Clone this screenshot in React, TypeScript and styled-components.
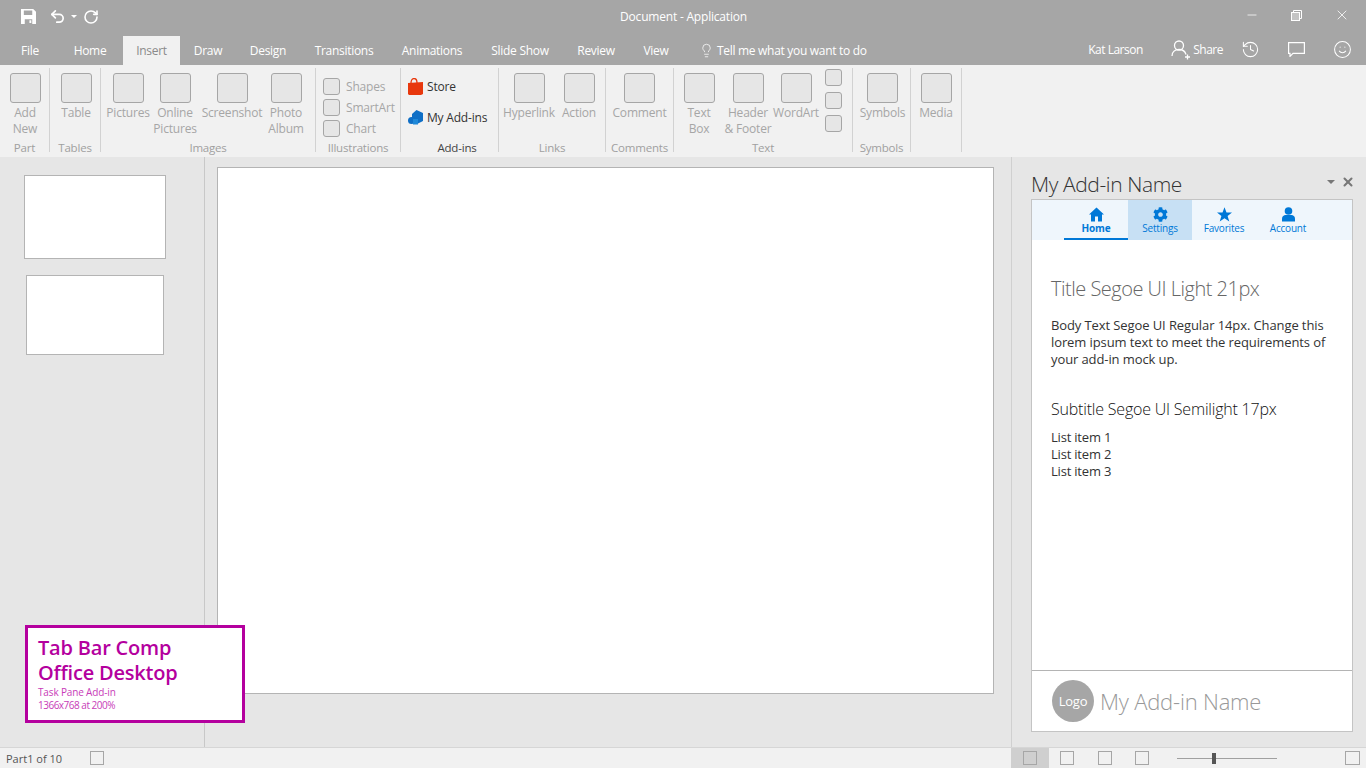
import styled, { createGlobalStyle } from "styled-components";
import { Lightbulb, History, Smile, Undo2, RotateCw, X, Minus } from "lucide-react";
import { FaCog } from "react-icons/fa";

const GlobalStyle = createGlobalStyle`
  html, body {
    margin: 0;
    padding: 0;
    background: #e6e6e6;
  }
  * {
    box-sizing: border-box;
  }
`;

const tabs = [
  { label: "File", w: 60 },
  { label: "Home", w: 60 },
  { label: "Insert", w: 57, active: true, ml: 3 },
  { label: "Draw", w: 56 },
  { label: "Design", w: 64 },
  { label: "Transitions", w: 88 },
  { label: "Animations", w: 88 },
  { label: "Slide Show", w: 88 },
  { label: "Review", w: 64 },
  { label: "View", w: 56 },
];

const Page = styled.div`
  position: relative;
  width: 1366px;
  height: 768px;
  display: flex;
  flex-direction: column;
  overflow: hidden;
  font-family: "Open Sans", "Noto Sans", sans-serif;
  font-size: 12px;
  letter-spacing: -0.2px;
`;

const TitleBar = styled.header`
  height: 65px;
  background: #a6a6a6;
  color: #fff;
  display: flex;
  flex-direction: column;
  flex: none;
`;

const TopRow = styled.div`
  height: 36px;
  display: flex;
  align-items: center;
`;

const Quick = styled.div`
  display: flex;
  align-items: center;
  padding: 0 0 3px 21px;
  width: 500px;
`;

const UndoIcon = styled(Undo2)`
  margin-left: 13px;
`;

const DocTitle = styled.div`
  width: 367px;
  padding-bottom: 4px;
  text-align: center;
`;

const WindowButtons = styled.div`
  margin-left: auto;
  display: flex;
  align-items: center;
  padding: 0 16px 6px 0;
  gap: 32px;
`;

const TabRow = styled.nav`
  height: 29px;
  display: flex;
  align-items: stretch;
  letter-spacing: -0.3px;
`;

const Tab = styled.div<{ $w: number; $ml?: number; $active?: boolean }>`
  width: ${(p) => p.$w}px;
  margin-left: ${(p) => p.$ml ?? 0}px;
  display: flex;
  align-items: center;
  justify-content: center;
  background: ${(p) => (p.$active ? "#f1f1f1" : "transparent")};
  color: ${(p) => (p.$active ? "#8a8a8a" : "#fff")};
`;

const Tell = styled.div`
  margin-left: 15px;
  display: flex;
  align-items: center;
  gap: 3px;
`;

const Account = styled.div`
  margin-left: auto;
  display: flex;
  align-items: center;
  padding-bottom: 2px;
`;

const UserName = styled.span`
  width: 83px;
  letter-spacing: -0.5px;
`;

const ShareText = styled.span`
  margin: 0 18px 0 3px;
  letter-spacing: -0.5px;
`;

const AccountIcons = styled.div`
  display: flex;
  align-items: center;
  gap: 28px;
  padding-right: 14px;
`;

const Ribbon = styled.div`
  height: 92px;
  flex: none;
  background: #f1f1f1;
  display: flex;
  padding-top: 3px;
`;

const Group = styled.section<{ $w: number }>`
  width: ${(p) => p.$w}px;
  height: 84px;
  flex: none;
  border-right: 1px solid #d2d2d2;
  display: flex;
  flex-direction: column;
`;

const GroupBody = styled.div<{ $pad?: number }>`
  flex: 1;
  min-height: 0;
  display: flex;
  padding-left: ${(p) => p.$pad ?? 0}px;
`;

const GroupLabel = styled.div<{ $dark?: boolean; $shift?: number }>`
  height: 12px;
  flex: none;
  text-align: center;
  font-size: 11.5px;
  line-height: 16px;
  padding-left: ${(p) => p.$shift ?? 0}px;
  color: ${(p) => (p.$dark ? "#444" : "#a0a0a0")};
`;

const BigItem = styled.div<{ $w: number }>`
  width: ${(p) => p.$w}px;
  flex: none;
  display: flex;
  flex-direction: column;
  align-items: center;
  padding-top: 5px;
  text-align: center;
  color: #a6a6a6;
  line-height: 16.5px;
  white-space: nowrap;
`;

const BigBox = styled.div`
  width: 31px;
  height: 30px;
  margin-bottom: 1.5px;
  flex: none;
  background: #e6e6e6;
  border: 1.5px solid #a6a6a6;
  border-radius: 3px;
`;

const SmallColumn = styled.div<{ $pad: number; $gap: number; $top: number }>`
  display: flex;
  flex-direction: column;
  gap: ${(p) => p.$gap}px;
  padding: ${(p) => p.$top}px 0 0 ${(p) => p.$pad}px;
`;

const SmallRow = styled.div`
  display: flex;
  align-items: center;
  gap: 6px;
  color: #a6a6a6;
  height: 17px;
`;

const SmallBox = styled.div`
  width: 17px;
  height: 17px;
  flex: none;
  background: #e6e6e6;
  border: 1.5px solid #a6a6a6;
  border-radius: 3px;
`;

const AddInRow = styled.div`
  display: flex;
  align-items: center;
  gap: 4px;
  height: 17px;
  color: #333;
`;

const Workspace = styled.main`
  flex: 1;
  display: flex;
  min-height: 0;
`;

const Thumbs = styled.aside`
  width: 205px;
  flex: none;
  border-right: 1px solid #c8c8c8;
  display: flex;
  flex-direction: column;
  align-items: center;
  padding: 18px 15px 0 0;
  gap: 16px;
`;

const Thumb = styled.div<{ $w: number; $h: number }>`
  width: ${(p) => p.$w}px;
  height: ${(p) => p.$h}px;
  background: #fff;
  border: 1px solid #b4b4b4;
`;

const Stage = styled.div`
  flex: 1;
  min-width: 0;
  padding: 10px 17px 0 12px;
`;

const Slide = styled.div`
  width: 777px;
  height: 527px;
  background: #fff;
  border: 1px solid #b4b4b4;
`;

const Pane = styled.aside`
  width: 355px;
  flex: none;
  border-left: 1px solid #d0d0d0;
  padding: 0 13px 15px 19px;
  display: flex;
  flex-direction: column;
`;

const PaneHead = styled.div`
  height: 42px;
  flex: none;
  display: flex;
  align-items: flex-end;
  color: #333;
  font-size: 21px;
  line-height: 30px;
  font-weight: 300;
  letter-spacing: -0.4px;
  position: relative;
`;

const PaneControls = styled.div`
  position: absolute;
  right: -2px;
  top: 18px;
  display: flex;
  align-items: center;
  gap: 6px;
  color: #777;
`;

const Caret = styled.span`
  width: 0;
  height: 0;
  border-left: 4px solid transparent;
  border-right: 4px solid transparent;
  border-top: 4px solid #777;
`;

const QuickCaret = styled(Caret)`
  border-left-width: 3px;
  border-right-width: 3px;
  border-top: 3px solid #fff;
  margin: 0 6px 0 5px;
`;

const Frame = styled.div`
  flex: 1;
  min-height: 0;
  background: #fff;
  border: 1px solid #c4c4c4;
  display: flex;
  flex-direction: column;
`;

const TabBar = styled.div`
  height: 40px;
  flex: none;
  background: #eff6fc;
  display: flex;
  padding-left: 32px;
`;

const PaneTab = styled.div<{ $active?: boolean; $hover?: boolean }>`
  width: 64px;
  display: flex;
  flex-direction: column;
  align-items: center;
  padding-top: 7px;
  color: #0078d7;
  font-size: 10px;
  line-height: 13px;
  font-weight: ${(p) => (p.$active ? 700 : 400)};
  background: ${(p) => (p.$hover ? "#c7e0f4" : "transparent")};
  border-bottom: ${(p) => (p.$active ? "2px solid #0078d7" : "none")};
`;

const Content = styled.div`
  flex: 1;
  min-height: 0;
  padding: 34px 20px 0 19px;
  color: #333;
`;

const Title = styled.h1`
  margin: 0 0 13px;
  font-size: 20px;
  line-height: 30px;
  font-weight: 300;
  letter-spacing: -0.5px;
  color: #666;
`;

const Body = styled.p`
  margin: 0 0 29px;
  font-size: 13px;
  line-height: 17px;
  letter-spacing: -0.1px;
`;

const Subtitle = styled.h2`
  margin: 0 0 8px;
  font-size: 16px;
  line-height: 24px;
  font-weight: 300;
  letter-spacing: -0.2px;
  color: #111;
`;

const ListItem = styled.div`
  font-size: 13px;
  line-height: 17px;
`;

const BrandBar = styled.div`
  height: 61px;
  flex: none;
  border-top: 1px solid #b4b4b4;
  display: flex;
  align-items: center;
  gap: 6px;
  padding-left: 20px;
  color: #999;
  font-size: 22px;
  font-weight: 300;
`;

const LogoCircle = styled.div`
  width: 42px;
  height: 42px;
  border-radius: 50%;
  background: #a6a6a6;
  color: #fff;
  font-size: 13px;
  font-weight: 400;
  display: flex;
  align-items: center;
  justify-content: center;
`;

const StatusBar = styled.footer`
  height: 21px;
  flex: none;
  background: #f1f1f1;
  border-top: 1px solid #d6d6d6;
  display: flex;
  align-items: center;
  color: #555;
  font-size: 11px;
`;

const PartCount = styled.span`
  width: 90px;
  padding-left: 6px;
  letter-spacing: 0;
`;

const StatusBox = styled.div<{ $fill?: string }>`
  width: 14px;
  height: 14px;
  background: ${(p) => p.$fill ?? "#f1f1f1"};
  border: 1px solid #a6a6a6;
`;

const ViewButton = styled.div<{ $active?: boolean }>`
  width: 37.5px;
  height: 20px;
  display: flex;
  align-items: center;
  justify-content: center;
  background: ${(p) => (p.$active ? "#cfcfcf" : "transparent")};
`;

const Views = styled.div`
  margin-left: 907px;
  display: flex;
`;

const Zoom = styled.div`
  width: 100px;
  height: 1px;
  margin-left: 16px;
  background: #a0a0a0;
  position: relative;
`;

const ZoomThumb = styled.span`
  position: absolute;
  left: 35px;
  top: -5px;
  width: 4px;
  height: 11px;
  background: #555;
`;

const ZoomBox = styled(StatusBox)`
  width: 15px;
  margin-left: 68px;
`;

const Badge = styled.div`
  position: absolute;
  left: 25px;
  top: 625px;
  width: 220px;
  height: 98px;
  background: #fff;
  border: 3px solid #b4009e;
  padding: 7px 10px;
  color: #b4009e;
`;

const BadgeTitle = styled.div`
  font-size: 20px;
  line-height: 25px;
  font-weight: 600;
  letter-spacing: -0.2px;
`;

const BadgeNotes = styled.div`
  margin-top: 1px;
`;

const BadgeNote = styled.div<{ $tight?: boolean }>`
  font-size: 10px;
  line-height: 13px;
  color: #c83cb8;
  letter-spacing: ${(p) => (p.$tight ? "-0.5px" : "-0.15px")};
`;

const SaveIcon = () => (
  <svg width="15" height="15" viewBox="0 0 16 16" fill="#fff">
    <path d="M0 0h13l3 3v13H0zM3 1.500v5h9v-5zM4 11v5h8v-5zM9 12h2v3H9z" fillRule="evenodd" />
  </svg>
);

const RestoreIcon = () => (
  <svg width="11" height="11" viewBox="0 0 11 11" fill="none" stroke="#fff">
    <rect x="0.5" y="2.5" width="8" height="8" fill="#c4c4c4" />
    <path d="M2.5 2.5v-2h8v8h-2" />
  </svg>
);

const ShareIcon = () => (
  <svg width="19" height="20" viewBox="0 0 19 20" fill="none" stroke="#fff" strokeWidth="1.3">
    <circle cx="8" cy="5.5" r="4.5" />
    <path d="M1 16c0-4 3-6.500 7-6.500s6 1.500 7 5M14 17h5M16.500 14.500v5" />
  </svg>
);

const CommentIcon = () => (
  <svg width="17" height="15" viewBox="0 0 17 15" fill="none" stroke="#fff" strokeWidth="1.2">
    <path d="M.6.6h15.800v10.800H5l-3 3v-3H.6z" />
  </svg>
);

const StoreIcon = () => (
  <svg width="15" height="17" viewBox="0 0 15 17">
    <path d="M0 5l15-1v12l-2 1H1l-1-1z" fill="#e8380d" />
    <path d="M3 5c0-6 6-6 6 0" fill="none" stroke="#e8380d" strokeWidth="1.300" />
  </svg>
);

const AddInsIcon = () => (
  <svg width="15" height="16" viewBox="0 0 15 16">
    <path d="M8.500 0L15 3v8l-6 3V9H4V4z" fill="#0f6fc6" />
    <circle cx="3.500" cy="10.500" r="3.500" fill="#0f6fc6" />
    <rect x="5" y="9" width="5" height="5.500" fill="#1e88d8" />
  </svg>
);

const HomeIcon = () => (
  <svg width="15" height="15" viewBox="0 0 15 15" fill="currentColor">
    <path d="M7.500.5L15 7.500h-2V14.500H9V9.500H6V14.500H2V7.500H0z" />
  </svg>
);

const StarIcon = () => (
  <svg width="15" height="15" viewBox="0 0 15 15" fill="currentColor">
    <path d="M7.500.2l2 5.300h5.500l-4.400 3.400 1.700 5.700-4.800-3.400-4.800 3.400 1.700-5.700L0 5.500h5.500z" />
  </svg>
);

const UserIcon = () => (
  <svg width="15" height="15" viewBox="0 0 15 15" fill="currentColor">
    <circle cx="7.500" cy="4" r="3.800" />
    <path d="M1 14.500v-3c0-2 2-3.500 3.500-3.500h6c1.500 0 3.500 1.500 3.500 3.500v3z" />
  </svg>
);

export default function App() {
  return (
    <Page>
      <GlobalStyle />
      <TitleBar>
        <TopRow>
          <Quick>
            <SaveIcon />
            <UndoIcon size={17} strokeWidth={2.4} />
            <QuickCaret />
            <RotateCw size={16} strokeWidth={2.4} />
          </Quick>
          <DocTitle>Document - Application</DocTitle>
          <WindowButtons>
            <Minus size={14} strokeWidth={1.3} />
            <RestoreIcon />
            <X size={16} strokeWidth={1.2} />
          </WindowButtons>
        </TopRow>
        <TabRow>
          {tabs.map((t) => (
            <Tab key={t.label} $w={t.w} $ml={t.ml} $active={t.active}>
              {t.label}
            </Tab>
          ))}
          <Tell>
            <Lightbulb size={15} strokeWidth={1.2} />
            Tell me what you want to do
          </Tell>
          <Account>
            <UserName>Kat Larson</UserName>
            <ShareIcon />
            <ShareText>Share</ShareText>
            <AccountIcons>
              <History size={19} strokeWidth={1.3} />
              <CommentIcon />
              <Smile size={19} strokeWidth={1.3} />
            </AccountIcons>
          </Account>
        </TabRow>
      </TitleBar>

      <Ribbon>
        <Group $w={50}>
          <GroupBody>
            <BigItem $w={50}>
              <BigBox />
              Add
              <br />
              New
            </BigItem>
          </GroupBody>
          <GroupLabel>Part</GroupLabel>
        </Group>
        <Group $w={51}>
          <GroupBody>
            <BigItem $w={52}>
              <BigBox />
              Table
            </BigItem>
          </GroupBody>
          <GroupLabel>Tables</GroupLabel>
        </Group>
        <Group $w={215}>
          <GroupBody $pad={3}>
            <BigItem $w={48}>
              <BigBox />
              Pictures
            </BigItem>
            <BigItem $w={46}>
              <BigBox />
              Online
              <br />
              Pictures
            </BigItem>
            <BigItem $w={68}>
              <BigBox />
              Screenshot
            </BigItem>
            <BigItem $w={40}>
              <BigBox />
              Photo
              <br />
              Album
            </BigItem>
          </GroupBody>
          <GroupLabel>Images</GroupLabel>
        </Group>
        <Group $w={85}>
          <GroupBody>
            <SmallColumn $pad={7} $gap={4} $top={10}>
              <SmallRow>
                <SmallBox />
                Shapes
              </SmallRow>
              <SmallRow>
                <SmallBox />
                SmartArt
              </SmallRow>
              <SmallRow>
                <SmallBox />
                Chart
              </SmallRow>
            </SmallColumn>
          </GroupBody>
          <GroupLabel>Illustrations</GroupLabel>
        </Group>
        <Group $w={98}>
          <GroupBody>
            <SmallColumn $pad={7} $gap={14} $top={10}>
              <AddInRow>
                <StoreIcon />
                Store
              </AddInRow>
              <AddInRow>
                <AddInsIcon />
                My Add-ins
              </AddInRow>
            </SmallColumn>
          </GroupBody>
          <GroupLabel $dark $shift={15}>
            Add-ins
          </GroupLabel>
        </Group>
        <Group $w={107}>
          <GroupBody>
            <BigItem $w={60}>
              <BigBox />
              Hyperlink
            </BigItem>
            <BigItem $w={40}>
              <BigBox />
              Action
            </BigItem>
          </GroupBody>
          <GroupLabel>Links</GroupLabel>
        </Group>
        <Group $w={68}>
          <GroupBody>
            <BigItem $w={67}>
              <BigBox />
              Comment
            </BigItem>
          </GroupBody>
          <GroupLabel>Comments</GroupLabel>
        </Group>
        <Group $w={179}>
          <GroupBody>
            <BigItem $w={50}>
              <BigBox />
              Text
              <br />
              Box
            </BigItem>
            <BigItem $w={48}>
              <BigBox />
              Header
              <br />
              &amp; Footer
            </BigItem>
            <BigItem $w={48}>
              <BigBox />
              WordArt
            </BigItem>
            <SmallColumn $pad={5} $gap={6} $top={1}>
              <SmallBox />
              <SmallBox />
              <SmallBox />
            </SmallColumn>
          </GroupBody>
          <GroupLabel>Text</GroupLabel>
        </Group>
        <Group $w={58}>
          <GroupBody $pad={1}>
            <BigItem $w={57}>
              <BigBox />
              Symbols
            </BigItem>
          </GroupBody>
          <GroupLabel>Symbols</GroupLabel>
        </Group>
        <Group $w={51}>
          <GroupBody>
            <BigItem $w={50}>
              <BigBox />
              Media
            </BigItem>
          </GroupBody>
        </Group>
      </Ribbon>

      <Workspace>
        <Thumbs>
          <Thumb $w={142} $h={84} />
          <Thumb $w={138} $h={80} />
        </Thumbs>
        <Stage>
          <Slide />
        </Stage>
        <Pane>
          <PaneHead>
            My Add-in Name
            <PaneControls>
              <Caret />
              <X size={14} strokeWidth={3.5} />
            </PaneControls>
          </PaneHead>
          <Frame>
            <TabBar>
              <PaneTab $active>
                <HomeIcon />
                Home
              </PaneTab>
              <PaneTab $hover>
                <FaCog size={15} />
                Settings
              </PaneTab>
              <PaneTab>
                <StarIcon />
                Favorites
              </PaneTab>
              <PaneTab>
                <UserIcon />
                Account
              </PaneTab>
            </TabBar>
            <Content>
              <Title>Title Segoe UI Light 21px</Title>
              <Body>
                Body Text Segoe UI Regular 14px. Change this lorem ipsum text to meet the
                requirements of your add-in mock up.
              </Body>
              <Subtitle>Subtitle Segoe UI Semilight 17px</Subtitle>
              <ListItem>List item 1</ListItem>
              <ListItem>List item 2</ListItem>
              <ListItem>List item 3</ListItem>
            </Content>
            <BrandBar>
              <LogoCircle>Logo</LogoCircle>
              My Add-in Name
            </BrandBar>
          </Frame>
        </Pane>
      </Workspace>

      <StatusBar>
        <PartCount>Part1 of 10</PartCount>
        <StatusBox />
        <Views>
          <ViewButton $active>
            <StatusBox $fill="#cfcfcf" />
          </ViewButton>
          <ViewButton>
            <StatusBox />
          </ViewButton>
          <ViewButton>
            <StatusBox />
          </ViewButton>
          <ViewButton>
            <StatusBox />
          </ViewButton>
        </Views>
        <Zoom>
          <ZoomThumb />
        </Zoom>
        <ZoomBox />
      </StatusBar>

      <Badge>
        <BadgeTitle>Tab Bar Comp</BadgeTitle>
        <BadgeTitle>Office Desktop</BadgeTitle>
        <BadgeNotes>
          <BadgeNote>Task Pane Add-in</BadgeNote>
          <BadgeNote $tight>1366x768 at 200%</BadgeNote>
        </BadgeNotes>
      </Badge>
    </Page>
  );
}
